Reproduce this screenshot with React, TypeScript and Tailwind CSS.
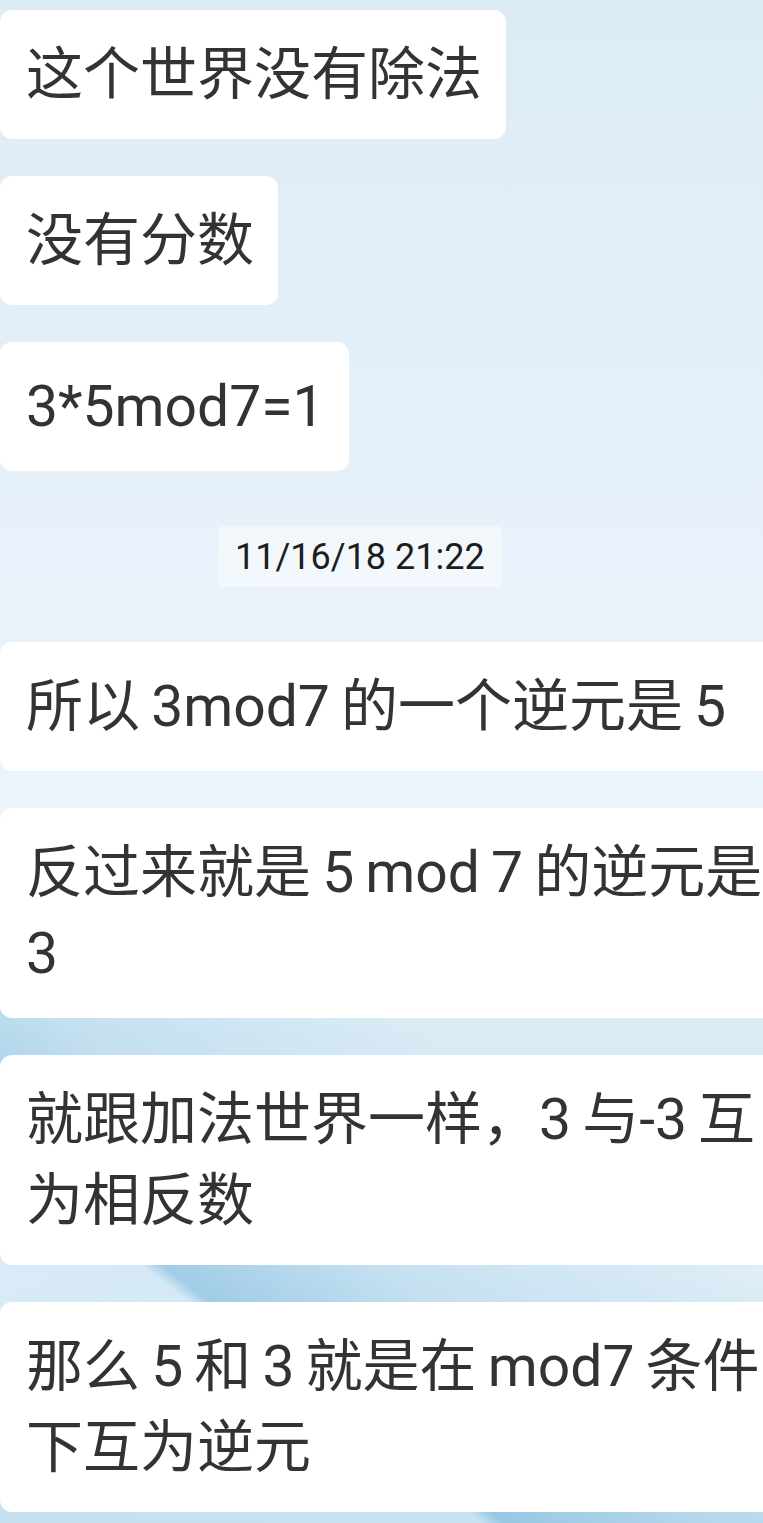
const intro = ["这个世界没有除法", "没有分数", "3*5mod7=1"];

// line breaks as in the screenshot
const replies: string[][] = [
  ["所以 3mod7 的一个逆元是 5"],
  ["反过来就是 5 mod 7 的逆元是", "3"],
  ["就跟加法世界一样，3 与-3 互", "为相反数"],
  ["那么 5 和 3 就是在 mod7 条件", "下互为逆元"],
];

function Bubble({ lines, wide }: { lines: string[]; wide?: boolean }) {
  return (
    <div
      className={`${wide ? "w-[790px]" : ""} whitespace-nowrap rounded-[12px] bg-white pl-[26px] pr-[24px] py-[24px] text-[57px] leading-[81px] [word-spacing:-3px] text-[#333333]`}
    >
      {lines.map((l, i) => (
        <div key={i}>{l}</div>
      ))}
    </div>
  );
}

export default function App() {
  return (
    <div className="relative w-[763px] h-[1523px] overflow-hidden bg-[linear-gradient(180deg,#dbecf5_0%,#e3eff8_22%,#eaf2fa_40%,#ecf4fb_55%,#e4f0f8_64%,#d9ebf5_68%,#e2eff8_80%,#d6e9f4_92%,#c6e0f0_100%)] font-['Roboto','Noto_Sans_CJK_SC',sans-serif]">
      {/* wallpaper streak */}
      <div className="pointer-events-none absolute left-0 right-0 bottom-0 h-[560px] bg-[linear-gradient(37deg,transparent_0%,rgba(200,228,243,0.4)_32%,rgba(120,183,220,0.6)_33.5%,rgba(160,205,232,0.4)_48%,transparent_72%)]" />
      <div className="relative w-[790px] pt-[10px] flex flex-col items-start gap-[37px]">
        {intro.map((m, i) => (
          <Bubble key={i} lines={[m]} />
        ))}
        <div className="ml-[218px] my-[18px] h-[61px] px-[17px] flex items-center rounded-[6px] bg-white/45 text-[36px] text-[#1d1d1d]">
          11/16/18 21:22
        </div>
        {replies.map((m, i) => (
          <Bubble key={i} lines={m} wide />
        ))}
      </div>
    </div>
  );
}
